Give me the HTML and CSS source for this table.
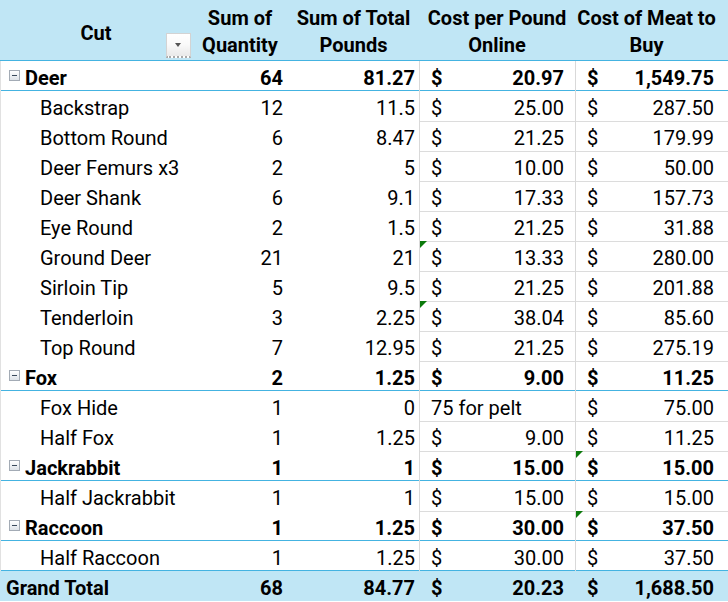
FILE: index.html
```html
<!DOCTYPE html>
<html lang="en">
<head>
<meta charset="utf-8">
<title>Pivot Table</title>
<link rel="stylesheet" href="styles.css">
</head>
<body>
<div class="pivot">
  <div class="row head">
    <div class="cell cut">Cut<span class="filter"></span></div>
    <div class="cell">Sum of<br>Quantity</div>
    <div class="cell">Sum of Total<br>Pounds</div>
    <div class="cell">Cost per Pound<br>Online</div>
    <div class="cell c5h">Cost of Meat to<br>Buy</div>
  </div>

  <div class="row cat">
    <div class="cell label"><span class="toggle"></span>Deer</div>
    <div class="cell q">64</div>
    <div class="cell p">81.27</div>
    <div class="cell cost c4"><span>$</span><span>20.97</span></div>
    <div class="cell cost c5"><span>$</span><span>1,549.75</span></div>
  </div>
  <div class="row det">
    <div class="cell label">Backstrap</div>
    <div class="cell q">12</div>
    <div class="cell p">11.5</div>
    <div class="cell cost c4"><span>$</span><span>25.00</span></div>
    <div class="cell cost c5"><span>$</span><span>287.50</span></div>
  </div>
  <div class="row det">
    <div class="cell label">Bottom Round</div>
    <div class="cell q">6</div>
    <div class="cell p">8.47</div>
    <div class="cell cost c4"><span>$</span><span>21.25</span></div>
    <div class="cell cost c5"><span>$</span><span>179.99</span></div>
  </div>
  <div class="row det">
    <div class="cell label">Deer Femurs x3</div>
    <div class="cell q">2</div>
    <div class="cell p">5</div>
    <div class="cell cost c4"><span>$</span><span>10.00</span></div>
    <div class="cell cost c5"><span>$</span><span>50.00</span></div>
  </div>
  <div class="row det">
    <div class="cell label">Deer Shank</div>
    <div class="cell q">6</div>
    <div class="cell p">9.1</div>
    <div class="cell cost c4"><span>$</span><span>17.33</span></div>
    <div class="cell cost c5"><span>$</span><span>157.73</span></div>
  </div>
  <div class="row det">
    <div class="cell label">Eye Round</div>
    <div class="cell q">2</div>
    <div class="cell p">1.5</div>
    <div class="cell cost c4"><span>$</span><span>21.25</span></div>
    <div class="cell cost c5"><span>$</span><span>31.88</span></div>
  </div>
  <div class="row det">
    <div class="cell label">Ground Deer</div>
    <div class="cell q">21</div>
    <div class="cell p">21</div>
    <div class="cell cost c4 flag"><span>$</span><span>13.33</span></div>
    <div class="cell cost c5"><span>$</span><span>280.00</span></div>
  </div>
  <div class="row det">
    <div class="cell label">Sirloin Tip</div>
    <div class="cell q">5</div>
    <div class="cell p">9.5</div>
    <div class="cell cost c4"><span>$</span><span>21.25</span></div>
    <div class="cell cost c5"><span>$</span><span>201.88</span></div>
  </div>
  <div class="row det">
    <div class="cell label">Tenderloin</div>
    <div class="cell q">3</div>
    <div class="cell p">2.25</div>
    <div class="cell cost c4 flag"><span>$</span><span>38.04</span></div>
    <div class="cell cost c5"><span>$</span><span>85.60</span></div>
  </div>
  <div class="row det">
    <div class="cell label">Top Round</div>
    <div class="cell q">7</div>
    <div class="cell p">12.95</div>
    <div class="cell cost c4"><span>$</span><span>21.25</span></div>
    <div class="cell cost c5"><span>$</span><span>275.19</span></div>
  </div>

  <div class="row cat">
    <div class="cell label"><span class="toggle"></span>Fox</div>
    <div class="cell q">2</div>
    <div class="cell p">1.25</div>
    <div class="cell cost c4"><span>$</span><span>9.00</span></div>
    <div class="cell cost c5"><span>$</span><span>11.25</span></div>
  </div>
  <div class="row det">
    <div class="cell label">Fox Hide</div>
    <div class="cell q">1</div>
    <div class="cell p">0</div>
    <div class="cell cost c4"><span>75 for pelt</span></div>
    <div class="cell cost c5"><span>$</span><span>75.00</span></div>
  </div>
  <div class="row det">
    <div class="cell label">Half Fox</div>
    <div class="cell q">1</div>
    <div class="cell p">1.25</div>
    <div class="cell cost c4"><span>$</span><span>9.00</span></div>
    <div class="cell cost c5"><span>$</span><span>11.25</span></div>
  </div>

  <div class="row cat">
    <div class="cell label"><span class="toggle"></span>Jackrabbit</div>
    <div class="cell q">1</div>
    <div class="cell p">1</div>
    <div class="cell cost c4"><span>$</span><span>15.00</span></div>
    <div class="cell cost c5 flag"><span>$</span><span>15.00</span></div>
  </div>
  <div class="row det">
    <div class="cell label">Half Jackrabbit</div>
    <div class="cell q">1</div>
    <div class="cell p">1</div>
    <div class="cell cost c4"><span>$</span><span>15.00</span></div>
    <div class="cell cost c5"><span>$</span><span>15.00</span></div>
  </div>

  <div class="row cat">
    <div class="cell label"><span class="toggle"></span>Raccoon</div>
    <div class="cell q">1</div>
    <div class="cell p">1.25</div>
    <div class="cell cost c4"><span>$</span><span>30.00</span></div>
    <div class="cell cost c5 flag"><span>$</span><span>37.50</span></div>
  </div>
  <div class="row det last">
    <div class="cell label">Half Raccoon</div>
    <div class="cell q">1</div>
    <div class="cell p">1.25</div>
    <div class="cell cost c4"><span>$</span><span>30.00</span></div>
    <div class="cell cost c5"><span>$</span><span>37.50</span></div>
  </div>

  <div class="row total">
    <div class="cell label">Grand Total</div>
    <div class="cell q">68</div>
    <div class="cell p">84.77</div>
    <div class="cell cost c4"><span>$</span><span>20.23</span></div>
    <div class="cell cost c5"><span>$</span><span>1,688.50</span></div>
  </div>
</div>
</body>
</html>
```

FILE: styles.css
```css
body {
  margin: 0;
  background: #ffffff;
  font-family: Roboto, "Noto Sans", sans-serif;
  font-size: 20px;
  color: #000000;
}

.pivot {
  width: 728px;
}

.row {
  display: grid;
  grid-template-columns: 192px 96px 131px 156px 153px;
  height: 30px;
  box-sizing: border-box;
}

.cell {
  box-sizing: border-box;
  padding-top: 5px;
  line-height: 25px;
  white-space: nowrap;
  position: relative;
}

/* header */
.head {
  height: 61px;
  background: #c0e6f5;
  border-bottom: 1px solid #44b3e1;
  font-weight: 700;
}

.head .cell {
  text-align: center;
  line-height: 27px;
  padding-top: 5px;
}

.head .cut {
  padding-top: 20px;
}

.head .c5h {
  padding-right: 10px;
}

.filter {
  position: absolute;
  left: 166px;
  top: 33px;
  width: 25px;
  height: 25px;
  box-sizing: border-box;
  border: 1px solid #d3d3d3;
  border-bottom: 2px dotted #a9a9a9;
  background: linear-gradient(#ffffff 0%, #fafafa 45%, #e9e9e9 100%);
}

.filter::after {
  content: "";
  position: absolute;
  left: 8px;
  top: 9px;
  border-left: 3px solid transparent;
  border-right: 3px solid transparent;
  border-top: 4px solid #555555;
}

/* body cells */
.label {
  border-left: 1px solid #e1e1e1;
  padding-left: 39px;
}

.q {
  text-align: right;
  padding-right: 5px;
}

.p {
  text-align: right;
  padding-right: 4px;
}

.cost {
  display: flex;
  justify-content: space-between;
  border-left: 1px solid #d9d9d9;
}

.c4 {
  padding-left: 11px;
  padding-right: 11px;
}

.c5 {
  padding-left: 11px;
  padding-right: 14px;
}

.det .cost {
  border-bottom: 1px solid #dcdcdc;
}

.det.last {
  border-bottom: 1px solid #44b3e1;
}

.det.last .cost {
  border-bottom: none;
}

/* category rows */
.cat {
  border-bottom: 1px solid #44b3e1;
  font-weight: 700;
}

.cat .label {
  display: flex;
  align-items: flex-start;
  padding-left: 8px;
}

.toggle {
  position: relative;
  width: 11px;
  height: 11px;
  box-sizing: border-box;
  margin: 4px 5px 0 0;
  border: 1px solid #a3abb5;
  background: linear-gradient(#ffffff, #dde2e8);
}

.toggle::after {
  content: "";
  position: absolute;
  left: 2px;
  top: 4px;
  width: 5px;
  height: 1px;
  background: #3a4a5c;
}

/* error indicator */
.flag::before {
  content: "";
  position: absolute;
  left: 0;
  top: 0;
  border-top: 7px solid #0c7a0c;
  border-right: 7px solid transparent;
}

/* grand total */
.total {
  background: #c0e6f5;
  font-weight: 700;
}

.total .label {
  border-left: none;
  padding-left: 6px;
}

.total .cost {
  border-left: none;
}

.total .c4 {
  padding-left: 12px;
}

.total .c5 {
  padding-left: 12px;
}
```
